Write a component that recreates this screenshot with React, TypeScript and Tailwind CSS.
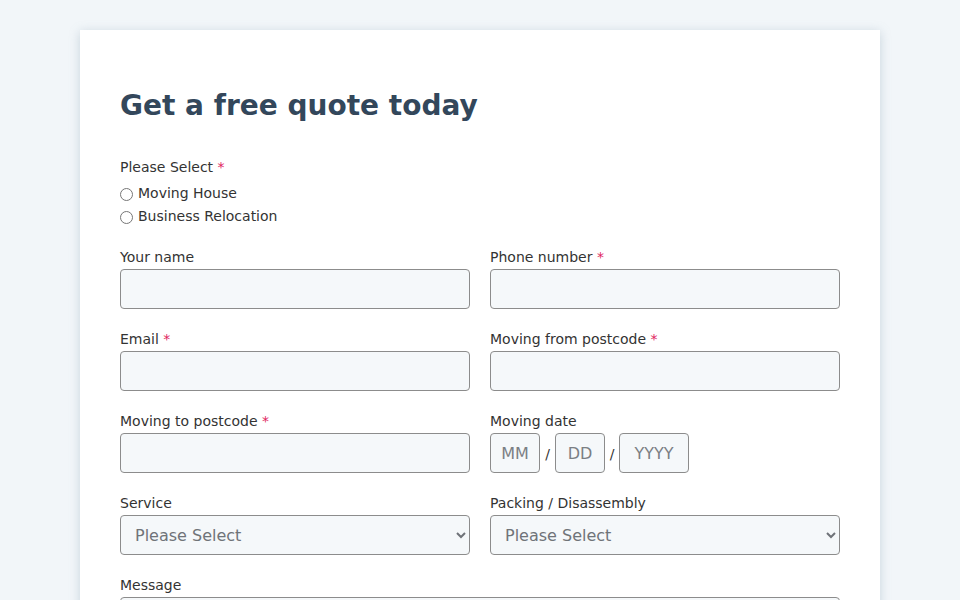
import React from 'react';

// Small label with optional required asterisk
function Label({ text, required }: { text: string; required?: boolean }) {
  return (
    <label className="block text-[14px] leading-[20px] text-[#333333] mb-[2px]">
      {text}
      {required && <span className="text-[#e0245e]"> *</span>}
    </label>
  );
}

const inputCls =
  'block w-full h-[40px] rounded-[4px] border border-[#8c8c8c] bg-[#f5f8fa] px-[14px] text-[16px] text-[#333] outline-none';

const selectCls =
  'block w-full h-[40px] rounded-[4px] border border-[#8c8c8c] bg-[#f5f8fa] pl-[10px] pr-[4px] text-[16px] text-[#6f7378] outline-none';

const dateCls =
  'h-[40px] rounded-[4px] border border-[#8c8c8c] bg-[#f5f8fa] text-center text-[16px] text-[#333] placeholder:text-[#7b7f84] outline-none';

export default function App() {
  return (
    <div
      className="min-h-[600px] w-full bg-[#f2f6f9] pt-[30px]"
      style={{ fontFamily: '"DejaVu Sans", sans-serif' }}
    >
      <div className="mx-auto w-[800px] bg-white px-[40px] pt-[57px] pb-[40px] shadow-[0_2px_10px_rgba(120,150,170,0.35)]">
        <h1 className="text-[28px] leading-[38px] font-bold text-[#33475b] mb-[32px]">
          Get a free quote today
        </h1>

        <div className="mb-[21px]">
          <Label text="Please Select" required />
          <div className="mt-[6px] flex flex-col gap-[3px]">
            <label className="flex items-center gap-[5px] text-[14px] leading-[20px] text-[#333]">
              <input type="radio" name="kind" className="w-[13px] h-[13px] m-0 mt-[2px]" />
              Moving House
            </label>
            <label className="flex items-center gap-[5px] text-[14px] leading-[20px] text-[#333]">
              <input type="radio" name="kind" className="w-[13px] h-[13px] m-0 mt-[2px]" />
              Business Relocation
            </label>
          </div>
        </div>

        <div className="grid grid-cols-2 gap-x-[20px] gap-y-[20px]">
          <div>
            <Label text="Your name" />
            <input className={inputCls} />
          </div>
          <div>
            <Label text="Phone number" required />
            <input className={inputCls} />
          </div>
          <div>
            <Label text="Email" required />
            <input className={inputCls} />
          </div>
          <div>
            <Label text="Moving from postcode" required />
            <input className={inputCls} />
          </div>
          <div>
            <Label text="Moving to postcode" required />
            <input className={inputCls} />
          </div>
          <div>
            <Label text="Moving date" />
            <div className="flex items-center">
              <input placeholder="MM" className={`${dateCls} w-[50px]`} />
              <span className="w-[15px] text-center text-[14px] text-[#333] mt-[2px]">/</span>
              <input placeholder="DD" className={`${dateCls} w-[50px]`} />
              <span className="w-[14px] text-center text-[14px] text-[#333] mt-[2px]">/</span>
              <input placeholder="YYYY" className={`${dateCls} w-[70px]`} />
            </div>
          </div>
          <div>
            <Label text="Service" />
            <select className={selectCls} defaultValue="">
              <option value="">Please Select</option>
              <option>Full removal</option>
              <option>Man and van</option>
            </select>
          </div>
          <div>
            <Label text="Packing / Disassembly" />
            <select className={selectCls} defaultValue="">
              <option value="">Please Select</option>
              <option>Yes</option>
              <option>No</option>
            </select>
          </div>
          <div className="col-span-2">
            <Label text="Message" />
            <textarea className="block w-full h-[100px] rounded-[4px] border border-[#8c8c8c] bg-[#f5f8fa] px-[14px] py-[8px] text-[16px] outline-none" />
          </div>
        </div>
      </div>
    </div>
  );
}
